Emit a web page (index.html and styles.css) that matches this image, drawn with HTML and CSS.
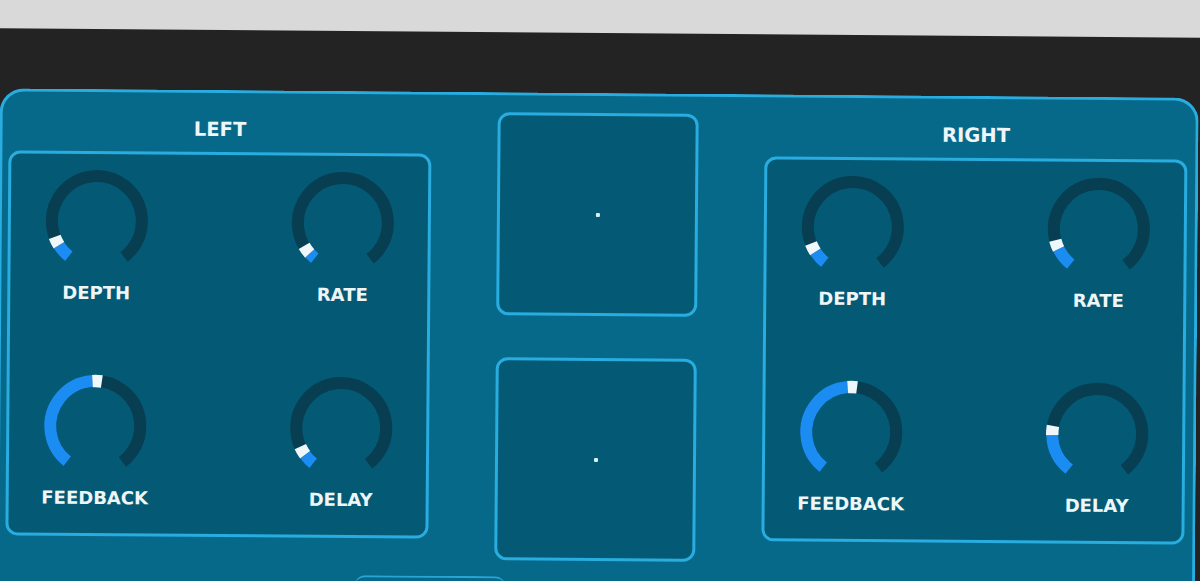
FILE: index.html
```html
<!DOCTYPE html>
<html lang="en">
<head>
<meta charset="utf-8">
<title>Stereo Chorus</title>
<link rel="stylesheet" href="styles.css">
</head>
<body>
<div class="viewport">
<div class="stage">
  <div class="dark">
    <div class="panel">
      <div class="layout">
        <section class="side">
          <h2 class="title">LEFT</h2>
          <div class="box">
            <div class="knob-cell">
              <svg class="knob" viewBox="0 0 120 120" width="120" height="120">
                <circle class="track" cx="60" cy="60" r="45" stroke-dasharray="223.05 400" transform="rotate(128 60 60)"/>
                <circle class="value" cx="60" cy="60" r="45" stroke-dasharray="14.92 400" transform="rotate(128 60 60)"/>
                <circle class="thumb" cx="60" cy="60" r="45" stroke-dasharray="9.42 400" transform="rotate(-213 60 60)"/>
              </svg>
              <span class="label">DEPTH</span>
            </div>
            <div class="knob-cell">
              <svg class="knob" viewBox="0 0 120 120" width="120" height="120">
                <circle class="track" cx="60" cy="60" r="45" stroke-dasharray="223.05 400" transform="rotate(128 60 60)"/>
                <circle class="value" cx="60" cy="60" r="45" stroke-dasharray="7.07 400" transform="rotate(128 60 60)"/>
                <circle class="thumb" cx="60" cy="60" r="45" stroke-dasharray="9.42 400" transform="rotate(-223 60 60)"/>
              </svg>
              <span class="label">RATE</span>
            </div>
            <div class="knob-cell">
              <svg class="knob" viewBox="0 0 120 120" width="120" height="120">
                <circle class="track" cx="60" cy="60" r="45" stroke-dasharray="223.05 400" transform="rotate(128 60 60)"/>
                <circle class="value" cx="60" cy="60" r="45" stroke-dasharray="108.39 400" transform="rotate(128 60 60)"/>
                <circle class="thumb" cx="60" cy="60" r="45" stroke-dasharray="9.42 400" transform="rotate(-94 60 60)"/>
              </svg>
              <span class="label">FEEDBACK</span>
            </div>
            <div class="knob-cell">
              <svg class="knob" viewBox="0 0 120 120" width="120" height="120">
                <circle class="track" cx="60" cy="60" r="45" stroke-dasharray="223.05 400" transform="rotate(128 60 60)"/>
                <circle class="value" cx="60" cy="60" r="45" stroke-dasharray="11.78 400" transform="rotate(128 60 60)"/>
                <circle class="thumb" cx="60" cy="60" r="45" stroke-dasharray="9.42 400" transform="rotate(-217 60 60)"/>
              </svg>
              <span class="label">DELAY</span>
            </div>
          </div>
        </section>

        <div class="pads">
          <div class="pad"><span class="dot"></span></div>
          <div class="pad"><span class="dot"></span></div>
        </div>

        <section class="side">
          <h2 class="title">RIGHT</h2>
          <div class="box">
            <div class="knob-cell">
              <svg class="knob" viewBox="0 0 120 120" width="120" height="120">
                <circle class="track" cx="60" cy="60" r="45" stroke-dasharray="223.05 400" transform="rotate(128 60 60)"/>
                <circle class="value" cx="60" cy="60" r="45" stroke-dasharray="14.14 400" transform="rotate(128 60 60)"/>
                <circle class="thumb" cx="60" cy="60" r="45" stroke-dasharray="9.42 400" transform="rotate(-214 60 60)"/>
              </svg>
              <span class="label">DEPTH</span>
            </div>
            <div class="knob-cell">
              <svg class="knob" viewBox="0 0 120 120" width="120" height="120">
                <circle class="track" cx="60" cy="60" r="45" stroke-dasharray="223.05 400" transform="rotate(128 60 60)"/>
                <circle class="value" cx="60" cy="60" r="45" stroke-dasharray="19.63 400" transform="rotate(128 60 60)"/>
                <circle class="thumb" cx="60" cy="60" r="45" stroke-dasharray="9.42 400" transform="rotate(-207 60 60)"/>
              </svg>
              <span class="label">RATE</span>
            </div>
            <div class="knob-cell">
              <svg class="knob" viewBox="0 0 120 120" width="120" height="120">
                <circle class="track" cx="60" cy="60" r="45" stroke-dasharray="223.05 400" transform="rotate(128 60 60)"/>
                <circle class="value" cx="60" cy="60" r="45" stroke-dasharray="107.60 400" transform="rotate(128 60 60)"/>
                <circle class="thumb" cx="60" cy="60" r="45" stroke-dasharray="9.42 400" transform="rotate(-95 60 60)"/>
              </svg>
              <span class="label">FEEDBACK</span>
            </div>
            <div class="knob-cell">
              <svg class="knob" viewBox="0 0 120 120" width="120" height="120">
                <circle class="track" cx="60" cy="60" r="45" stroke-dasharray="223.05 400" transform="rotate(128 60 60)"/>
                <circle class="value" cx="60" cy="60" r="45" stroke-dasharray="39.27 400" transform="rotate(128 60 60)"/>
                <circle class="thumb" cx="60" cy="60" r="45" stroke-dasharray="9.42 400" transform="rotate(-182 60 60)"/>
              </svg>
              <span class="label">DELAY</span>
            </div>
          </div>
        </section>
      </div>
      <div class="footer"><div class="tab"></div></div>
    </div>
  </div>
</div>
</div>
</body>
</html>
```

FILE: styles.css
```css
html, body {
  margin: 0;
  padding: 0;
  overflow: hidden;
}

body {
  background: #d9d9d9;
  font-family: "DejaVu Sans", "Liberation Sans", sans-serif;
}

.viewport {
  width: 1200px;
  height: 581px;
  overflow: hidden;
}

.stage {
  width: 1200px;
  transform-origin: 600px 300px;
  transform: rotate(0.45deg);
}

.dark {
  margin: 33px -30px 0;
  padding: 60px 30px 0;
  background: #232323;
}

.panel {
  margin: 0 3px 0 -2px;
  height: 500px;
  box-sizing: border-box;
  padding: 17px 7px 0 6px;
  background: #07698a;
  border: 3px solid #29acdf;
  border-bottom: none;
  border-radius: 24px 24px 0 0;
  overflow: hidden;
}

.layout {
  display: grid;
  grid-template-columns: 423px 201px 423px;
  column-gap: 66px;
  align-items: start;
}

.side {
  display: flex;
  flex-direction: column;
}

.title {
  margin: 0 0 2px;
  height: 40px;
  line-height: 40px;
  text-align: center;
  font-size: 19.5px;
  font-weight: bold;
  color: #eef6f8;
}

.box {
  box-sizing: border-box;
  height: 385px;
  padding: 7px 0 25px;
  background: #045a74;
  border: 3px solid #29acdf;
  border-radius: 12px;
  display: grid;
  grid-template-columns: 172px 172px;
  column-gap: 74px;
  row-gap: 63px;
  align-content: start;
}

.knob-cell {
  display: flex;
  flex-direction: column;
  align-items: center;
}

.knob {
  display: block;
}

.track, .value, .thumb {
  fill: none;
  stroke-linecap: butt;
}

.track {
  stroke: #073e51;
  stroke-width: 12;
}

.value {
  stroke: #1a8cf2;
  stroke-width: 12;
}

.thumb {
  stroke: #f0f7fb;
  stroke-width: 12.5;
}

.label {
  margin-top: 2px;
  line-height: 20px;
  font-size: 18px;
  font-weight: bold;
  color: #eef6f8;
}

.pads {
  display: flex;
  flex-direction: column;
  gap: 42px;
}

.pad {
  box-sizing: border-box;
  height: 203px;
  background: #045a74;
  border: 3px solid #29acdf;
  border-radius: 12px;
  display: flex;
  align-items: center;
  justify-content: center;
}

.dot {
  width: 4px;
  height: 4px;
  background: #d6eef6;
  border-radius: 1px;
}

.footer {
  padding: 16px 0 0 350px;
}

.tab {
  width: 150px;
  height: 20px;
  border-top: 2px solid #2aa4d4;
  border-radius: 10px 10px 0 0;
}
```
